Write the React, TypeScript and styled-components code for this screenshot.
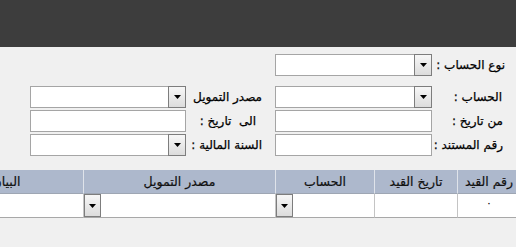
import React from "react";
import styled, { createGlobalStyle } from "styled-components";

const Global = createGlobalStyle`
  html, body { margin: 0; padding: 0; background: #f0f0f0; overflow: hidden; }
  body { font-family: "DejaVu Sans", "Noto Sans", sans-serif; }
`;

const Page = styled.div`
  width: 516px;
  height: 247px;
  direction: rtl;
  background: #f0f0f0;
  overflow: hidden;
`;

const TopBar = styled.div`
  height: 47px;
  background: #3d3d3d;
`;

const Form = styled.div`
  display: flex;
  flex-direction: column;
  gap: 10px;
  padding: 7px 11px 0 0;
`;

const Columns = styled.div`
  display: flex;
  gap: 13px;
`;

const FieldGroup = styled.div<{ $label: number; $input: number }>`
  display: grid;
  grid-template-columns: ${(p) => p.$label}px ${(p) => p.$input}px;
  grid-auto-rows: 22px;
  row-gap: 2px;
`;

const Label = styled.div<{ $indent?: number }>`
  display: flex;
  align-items: center;
  padding-right: ${(p) => p.$indent ?? 0}px;
  font-size: 12px;
  color: #000;
  -webkit-text-stroke: 0.25px #000;
  white-space: nowrap;
`;

const TextBox = styled.div`
  box-sizing: border-box;
  height: 22px;
  background: #fff;
  border: 1px solid #a5a5a5;
`;

const SelectBox = styled.div`
  box-sizing: border-box;
  display: flex;
  height: 22px;
  background: #fff;
  border: 1px solid #a5a5a5;
`;

const DropButton = styled.div`
  box-sizing: border-box;
  width: 18px;
  margin: -1px -1px -1px 0;
  display: flex;
  align-items: center;
  justify-content: center;
  border: 1px solid #7d7d7d;
  background: linear-gradient(#f7f7f7, #dcdcdc);
`;

const Arrow = () => (
  <svg width="7" height="4" viewBox="0 0 7 4">
    <polygon points="0,0 7,0 3.5,4" fill="#000" />
  </svg>
);

const Select = () => (
  <SelectBox>
    <DropButton>
      <Arrow />
    </DropButton>
  </SelectBox>
);

const GRID_COLS = "63px 83px 99px 192px 154px";

const TableWrap = styled.div`
  margin-top: 14px;
  overflow: hidden;
`;

const Grid = styled.div`
  width: 591px;
  margin-right: -4px;
  display: grid;
  grid-template-columns: ${GRID_COLS};
  grid-template-rows: 24px 24px;
`;

const HeadCell = styled.div`
  box-sizing: border-box;
  display: flex;
  align-items: center;
  justify-content: center;
  background: #adb8cc;
  border-left: 1px solid #dfe3ea;
  border-bottom: 1px solid #9ea6b3;
  font-size: 12.5px;
  color: #111;
  -webkit-text-stroke: 0.2px #111;
  white-space: nowrap;
  overflow: hidden;
`;

const BodyCell = styled.div`
  box-sizing: border-box;
  display: flex;
  justify-content: center;
  background: #fff;
  border-left: 1px solid #c4c4c4;
  border-bottom: 1px solid #a8a8a8;
`;

const SelectCell = styled(BodyCell)`
  justify-content: flex-end;
`;

const CellButton = styled.div`
  box-sizing: border-box;
  width: 17px;
  height: 23px;
  display: flex;
  align-items: center;
  justify-content: center;
  border: 1px solid #7d7d7d;
  background: linear-gradient(#f7f7f7, #dcdcdc);
`;

const Zero = styled.span`
  padding-top: 3px;
  font-size: 11px;
  color: #000;
`;

const columns = ["رقم القيد", "تاريخ القيد", "الحساب", "مصدر التمويل", "البيان"];

export default function App() {
  return (
    <>
      <Global />
      <Page>
        <TopBar />
        <Form>
          <FieldGroup $label={73} $input={157}>
            <Label>نوع الحساب :</Label>
            <Select />
          </FieldGroup>
          <Columns>
            <FieldGroup $label={73} $input={157}>
              <Label $indent={3}>الحساب :</Label>
              <Select />
              <Label $indent={2}>من تاريخ :</Label>
              <TextBox />
              <Label $indent={2}>رقم المستند :</Label>
              <TextBox />
            </FieldGroup>
            <FieldGroup $label={76} $input={156}>
              <Label>مصدر التمويل</Label>
              <Select />
              <Label $indent={6}>الى&nbsp; تاريخ :</Label>
              <TextBox />
              <Label>السنة المالية :</Label>
              <Select />
            </FieldGroup>
          </Columns>
        </Form>
        <TableWrap>
          <Grid>
            {columns.map((c) => (
              <HeadCell key={c}>{c}</HeadCell>
            ))}
            <BodyCell>
              <Zero>٠</Zero>
            </BodyCell>
            <BodyCell />
            <SelectCell>
              <CellButton>
                <Arrow />
              </CellButton>
            </SelectCell>
            <SelectCell>
              <CellButton>
                <Arrow />
              </CellButton>
            </SelectCell>
            <BodyCell />
          </Grid>
        </TableWrap>
      </Page>
    </>
  );
}
